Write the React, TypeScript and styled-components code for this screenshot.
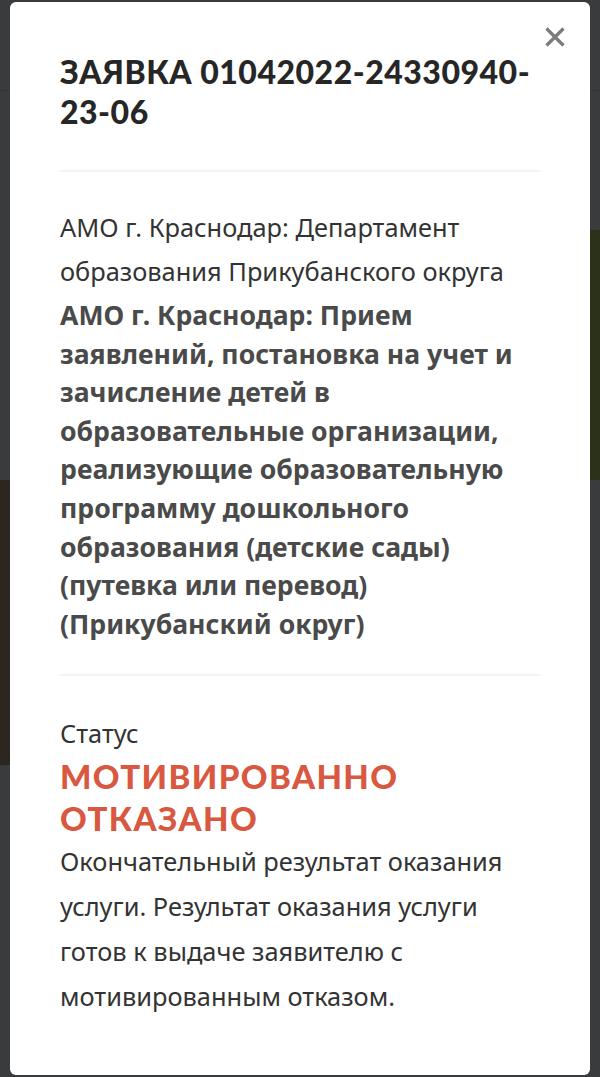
import React from 'react'
import styled, { createGlobalStyle } from 'styled-components'

const GlobalStyle = createGlobalStyle`
  html, body {
    margin: 0;
    padding: 0;
    background: #3a3b3c;
  }
  body {
    font-family: "Noto Sans", sans-serif;
  }
`

const Backdrop = styled.div`
  position: fixed;
  inset: 0;
  display: flex;
  flex-direction: column;
  z-index: 0;
`

const BackHeader = styled.div`
  height: 90px;
  border-bottom: 1px solid #323334;
  flex-shrink: 0;
`

const BackRow = styled.div<{ $height: number; $left: string; $right: string }>`
  display: flex;
  height: ${(p) => p.$height}px;
  flex-shrink: 0;

  &::before,
  &::after {
    content: '';
    flex: 1;
  }
  &::before {
    background: ${(p) => p.$left};
  }
  &::after {
    background: ${(p) => p.$right};
  }
`

const Modal = styled.div`
  position: relative;
  z-index: 1;
  box-sizing: border-box;
  width: 580px;
  min-height: 1065px;
  margin: 2px 0 0 10px;
  padding: 50px 50px 56px;
  background: #fff;
  border-radius: 6px;
`

const Close = styled.button`
  position: absolute;
  top: 22px;
  right: 22px;
  width: 26px;
  height: 26px;
  padding: 0;
  border: 0;
  background: none;
  cursor: pointer;
`

const Title = styled.h1`
  margin: 0;
  font-family: Lato, sans-serif;
  font-weight: 900;
  font-size: 32px;
  line-height: 40px;
  letter-spacing: 0.5px;
  color: #262626;
`

const Divider = styled.hr<{ $top: number; $bottom: number }>`
  height: 2px;
  margin: ${(p) => `${p.$top}px 0 ${p.$bottom}px`};
  border: 0;
  background: #f3f3f3;
`

const Text = styled.p`
  max-width: 460px;
  margin: 0;
  font-family: "Noto Sans", sans-serif;
  font-size: 25.4px;
  line-height: 44px;
  color: #333;
`

const Organization = styled(Text)`
  margin-bottom: 3px;
`

const Service = styled.p`
  max-width: 460px;
  margin: 0;
  font-family: "Noto Sans", sans-serif;
  font-weight: 700;
  font-size: 26.6px;
  line-height: 38.6px;
  color: #4a4a4a;
`

const Status = styled.div`
  font-family: Lato, sans-serif;
  font-weight: 900;
  font-size: 33px;
  line-height: 42px;
  letter-spacing: 1.4px;
  color: #d95840;
`

const Description = styled(Text)`
  line-height: 45px;
`

export default function App() {
  return (
    <>
      <GlobalStyle />
      <Backdrop>
        <BackHeader />
        <BackRow $height={139} $left="transparent" $right="transparent" />
        <BackRow $height={250} $left="transparent" $right="#2c3219" />
        <BackRow $height={285} $left="#2c2620" $right="transparent" />
      </Backdrop>

      <Modal>
        <Close aria-label="Закрыть">
          <svg width="26" height="26" viewBox="0 0 26 26">
            <path
              d="M4.5 4.5 L21.5 21.5 M21.5 4.5 L4.5 21.5"
              stroke="#7b7b7b"
              strokeWidth="3.2"
              strokeLinecap="butt"
            />
          </svg>
        </Close>

        <Title>ЗАЯВКА 01042022-24330940-23-06</Title>

        <Divider $top={38} $bottom={33} />

        <Organization>
          АМО г. Краснодар: Департамент образования Прикубанского округа
        </Organization>
        <Service>
          АМО г. Краснодар: Прием заявлений, постановка на учет и зачисление
          детей в образовательные организации, реализующие образовательную
          программу дошкольного образования (детские сады) (путевка или
          перевод) (Прикубанский округ)
        </Service>

        <Divider $top={31} $bottom={35} />

        <Text>Статус</Text>
        <Status>МОТИВИРОВАННО ОТКАЗАНО</Status>
        <Description>
          Окончательный результат оказания услуги. Результат оказания услуги
          готов к выдаче заявителю с мотивированным отказом.
        </Description>
      </Modal>
    </>
  )
}
